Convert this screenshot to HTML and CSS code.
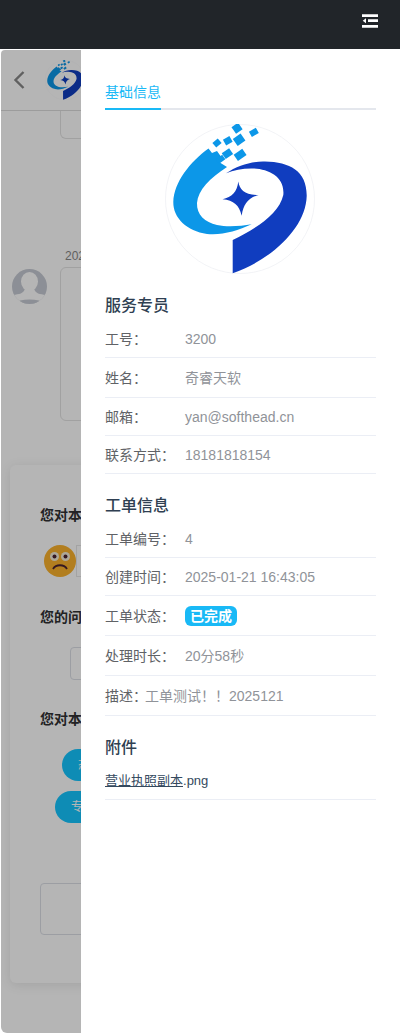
FILE: index.html
```html
<!DOCTYPE html>
<html lang="zh-CN">
<head>
  <meta charset="UTF-8" />
  <title>工单详情</title>
  <link rel="stylesheet" href="styles.css">
</head>
<body>

  <svg class="sprites" width="0" height="0">
    <symbol id="logo" viewBox="0 0 150 150">
      <circle cx="75" cy="75" r="74.5" fill="#fff" stroke="#eceef2" stroke-width="0.7"/>
      <path fill="#0c97e8" d="M43.5 24.5 L47 29 L52 27 L57 34 L54 38 L62 43 C45 54 33 66 32 79 C31.5 91 40 98 52 101 C63 103.500 76 102 86.700 100.300 C72 107 57 111.500 42 110 C22 107 8 94 8.300 78 C9 58 25 38 43.500 24.500 Z"/>
      <path fill="#103dbf" d="M61 49.300 C73 41 88 37 100 37.500 C125 38 142 47 141.700 72 C141 103 108 135 67.700 149.300 L67.700 116 C92 104 114 90 118.300 71 C120 53 104 45 88 44.500 C78 44.300 69 46 61 49.300 Z"/>
      <path fill="#103dbf" d="M73.300 57.500 C74.500 66 80 71 93.500 71 C83 74 78.500 80 76.700 91.700 C74 81 69 76.500 57.500 75.300 C67 73 72 68 73.300 57.500 Z"/>
      <g fill="#0c97e8">
        <rect x="68" y="0" width="8" height="8" transform="rotate(-35 72.300 4)"/>
        <rect x="85" y="5.500" width="8" height="6" transform="rotate(-30 88.700 8.700)"/>
        <rect x="48.500" y="16" width="7" height="6" transform="rotate(-40 52 19)"/>
        <rect x="59" y="13.500" width="7.500" height="6.500" transform="rotate(-30 62.700 16.700)"/>
        <rect x="69.500" y="11.500" width="9.500" height="8.500" transform="rotate(-35 74.300 16)"/>
        <rect x="58" y="26" width="9" height="7" transform="rotate(-35 62.700 29.700)"/>
        <rect x="70" y="27" width="10.500" height="7.500" transform="rotate(-35 75.300 31)"/>
        <rect x="51.500" y="32.500" width="8" height="5.500" transform="rotate(-35 55.700 35.300)"/>
      </g>
    </symbol>
  </svg>

  <div class="topbar">
    <svg class="menu-icon" width="16" height="14" viewBox="0 0 16 14">
      <path fill="#fff" d="M0 0.300h16v2.700H0zM6 5.300h10v2.700H6zM0 11h16v2.700H0zM4 4.300v5L0.700 6.800z"/>
    </svg>
  </div>

  <div class="panel">

    <!-- Page behind the drawer -->
    <div class="page">
      <div class="page-head">
        <svg class="back-icon" width="12" height="20" viewBox="0 0 12 20">
          <path fill="none" stroke="#888" stroke-width="2.400" d="M10.500 2 L2.500 10 L10.500 18"/>
        </svg>
        <svg class="head-logo" width="40" height="40"><use href="#logo"/></svg>
      </div>

      <div class="bubble bubble-stub"></div>

      <div class="msg">
        <div class="msg-time">202</div>
        <div class="msg-body">
          <svg class="avatar" width="35" height="35" viewBox="0 0 35 35">
            <defs><clipPath id="round"><circle cx="17.500" cy="17.500" r="17.500"/></clipPath></defs>
            <g clip-path="url(#round)">
              <rect width="35" height="35" fill="#c6cad3"/>
              <ellipse cx="17.500" cy="12.500" rx="8.500" ry="9.500" fill="#fff"/>
              <path fill="#fff" d="M1 26 C7 25 12 25 13 19 L22 19 C23 25 28 25 34 26 L34 35 L1 35 Z"/>
              <path fill="#c6cad3" d="M8 31.500 C14 30 21 30 27 31.500 L27 35 L8 35 Z"/>
            </g>
          </svg>
          <div class="bubble bubble-large"></div>
        </div>
      </div>

      <div class="rate-card">
        <div class="rate-title">您对本</div>
        <div class="rate-row">
          <svg class="emoji" width="32" height="32" viewBox="0 0 32 32">
            <circle cx="16" cy="16" r="16" fill="#fbb22c"/>
            <circle cx="10.500" cy="11.500" r="4.500" fill="#f4ecd8"/>
            <circle cx="21.500" cy="11.500" r="4.500" fill="#f4ecd8"/>
            <circle cx="10.500" cy="11.500" r="2" fill="#4a2230"/>
            <circle cx="21.500" cy="11.500" r="2" fill="#4a2230"/>
            <path fill="none" stroke="#4a2230" stroke-width="1.800" d="M9 24 C12 19 20 19 23 24"/>
          </svg>
          <div class="rate-line"></div>
        </div>
        <div class="rate-title">您的问</div>
        <div class="rate-input"></div>
        <div class="rate-title">您对本</div>
        <div class="pills">
          <span class="pill pill-first">态</span>
          <span class="pill pill-second">专</span>
        </div>
        <div class="rate-area"></div>
      </div>
    </div>

    <div class="overlay"></div>

    <!-- Drawer -->
    <div class="drawer">
      <div class="tabs">
        <div class="tab">基础信息</div>
      </div>

      <svg class="drawer-logo" width="150" height="150"><use href="#logo"/></svg>

      <h3>服务专员</h3>
      <div class="row"><span class="label">工号：</span><span class="value latin">3200</span></div>
      <div class="row"><span class="label">姓名：</span><span class="value">奇睿天软</span></div>
      <div class="row"><span class="label">邮箱：</span><span class="value latin">yan@softhead.cn</span></div>
      <div class="row"><span class="label">联系方式：</span><span class="value latin">18181818154</span></div>

      <h3>工单信息</h3>
      <div class="row"><span class="label">工单编号：</span><span class="value latin">4</span></div>
      <div class="row"><span class="label">创建时间：</span><span class="value latin">2025-01-21 16:43:05</span></div>
      <div class="row"><span class="label">工单状态：</span><span class="value"><span class="badge">已完成</span></span></div>
      <div class="row"><span class="label">处理时长：</span><span class="value">20分58秒</span></div>
      <div class="row"><span class="label-plain">描述：</span><span class="value">工单测试！！2025121</span></div>

      <h3>附件</h3>
      <div class="row"><a class="file" href="#"><span class="file-name">营业执照副本</span>.png</a></div>
    </div>
  </div>

</body>
</html>
```

FILE: styles.css
```css
* {
  margin: 0;
  padding: 0;
  box-sizing: border-box;
  font-family: "Liberation Sans", "Noto Sans CJK SC", sans-serif;
}

body {
  height: 100vh;
  background: #fff;
  display: flex;
  flex-direction: column;
  overflow: hidden;
  font-size: 14px;
}

.sprites {
  position: absolute;
}

.topbar {
  height: 49px;
  flex: none;
  background: #212529;
  display: flex;
  align-items: center;
  justify-content: flex-end;
  padding: 0 22px 7px 0;
}

.panel {
  position: relative;
  flex: 1;
  margin: 1px 0 0 1px;
  border-radius: 4px 0 0 6px;
  overflow: hidden;
  background: #fff;
}

.overlay {
  position: absolute;
  inset: 0;
  background: rgba(0, 0, 0, 0.29);
}

/* page behind */
.page {
  width: 80px;
  height: 100%;
  overflow: hidden;
}

.page-head {
  height: 61px;
  width: 399px;
  border-bottom: 1px solid #dcdcdc;
  display: flex;
  align-items: center;
  gap: 20px;
  padding-left: 12px;
}

.bubble {
  border: 1px solid #e3e3e3;
  border-radius: 6px;
  width: 220px;
  flex: none;
}

.bubble-stub {
  height: 28px;
  margin-left: 59px;
  border-top: none;
  border-radius: 0 0 6px 6px;
}

.msg {
  margin-top: 110px;
  width: 399px;
}

.msg-time {
  margin-left: 64px;
  font-size: 12px;
  color: #888;
  line-height: 14px;
}

.msg-body {
  display: flex;
  align-items: flex-start;
  gap: 13px;
  padding-left: 11px;
  margin-top: 4px;
}

.avatar {
  margin-top: 2px;
}

.bubble-large {
  height: 154px;
}

.rate-card {
  margin: 44px 0 0 9px;
  width: 380px;
  height: 518px;
  border-radius: 6px;
  padding: 40px 30px;
  background: #fff;
  box-shadow: 0 2px 12px rgba(0, 0, 0, 0.1);
}

.rate-title {
  font-size: 14px;
  font-weight: bold;
  color: #303133;
  line-height: 20px;
}

.rate-row {
  display: flex;
  margin: 20px 0 30px 4px;
}

.rate-line {
  width: 200px;
  height: 32px;
  border: 1px solid #e6e6e6;
  flex: none;
}

.rate-input {
  width: 200px;
  height: 33px;
  margin: 20px 0 29px 30px;
  border: 1px solid #dcdfe6;
  border-radius: 4px;
}

.pills {
  display: flex;
  flex-direction: column;
  align-items: flex-start;
  gap: 10px;
  margin-top: 20px;
}

.pill {
  width: 100px;
  height: 32px;
  line-height: 32px;
  border-radius: 16px;
  padding: 0 16px;
  color: #fff;
  background: #15c6ff;
  font-size: 12px;
  white-space: nowrap;
}

.pill-first {
  margin-left: 22px;
}

.pill-second {
  margin-left: 15px;
}

.rate-area {
  width: 300px;
  height: 52px;
  margin-top: 60px;
  border: 1px solid #dcdfe6;
  border-radius: 4px;
}

/* drawer */
.drawer {
  position: absolute;
  top: 0;
  right: 0;
  bottom: 0;
  width: 319px;
  background: #fff;
  padding: 31px 24px 0;
}

.tabs {
  border-bottom: 2px solid #e4e7ed;
  height: 29px;
}

.tab {
  display: inline-block;
  height: 29px;
  line-height: 22px;
  color: #19b9f6;
  border-bottom: 2px solid #19b9f6;
}

.drawer-logo {
  display: block;
  margin: 14px 0 0 60px;
}

h3 {
  font-size: 16px;
  font-weight: 500;
  line-height: 24px;
  color: #2f3f52;
  margin: 20px 0 2px;
}

.row {
  padding: 10px 0 9px;
  line-height: 18px;
  border-bottom: 1px solid #ebeef5;
  display: flex;
  align-items: center;
  color: #606266;
}

.label {
  width: 80px;
  flex: none;
}

.label-plain {
  margin-right: -2px;
}

.value {
  color: #909399;
  line-height: 20px;
}

.value.latin {
  line-height: 18px;
}

.badge {
  display: block;
  background: #19b9f6;
  color: #fff;
  font-weight: bold;
  line-height: 20px;
  padding: 0 5px;
  border-radius: 6px;
}

.file {
  font-size: 13px;
  color: #34495e;
  text-decoration: none;
}

.file-name {
  text-decoration: underline;
}
```
